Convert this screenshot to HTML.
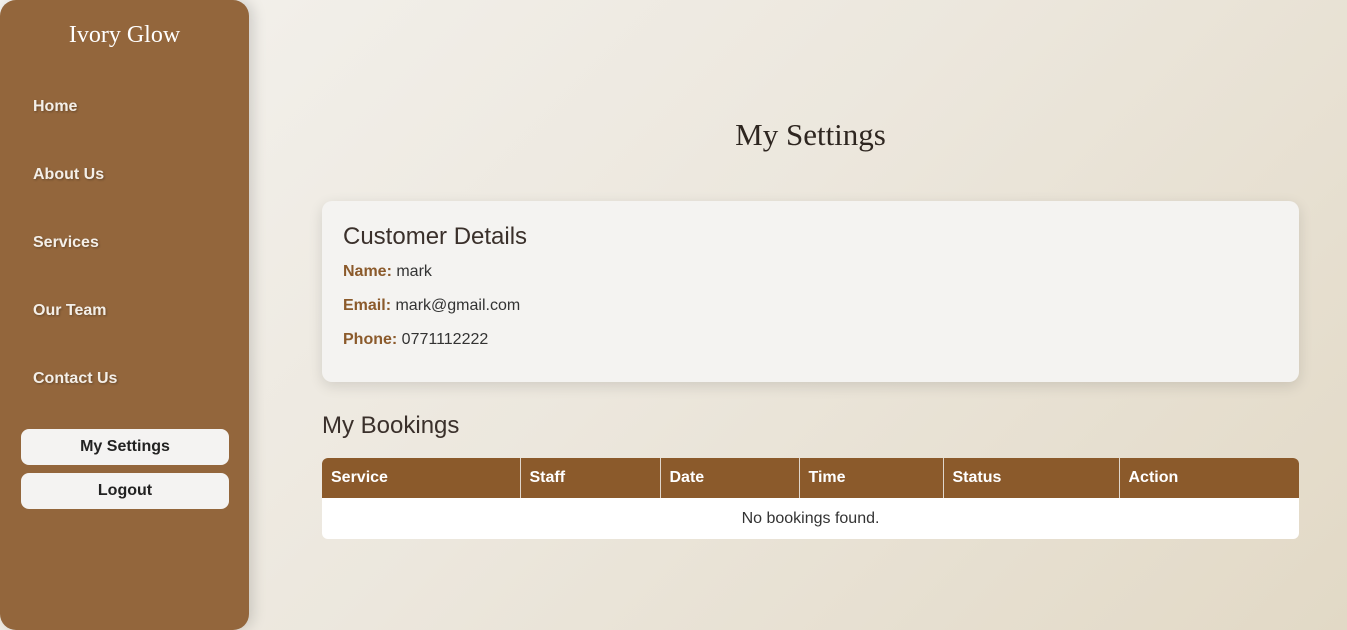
<!DOCTYPE html>
<html><head><style>
*{box-sizing:border-box;margin:0;padding:0}
body{width:1347px;height:630px;overflow:hidden;font-family:"Liberation Sans",Arial,sans-serif;background:linear-gradient(135deg,#f4f2ee 0%,#ece7dd 50%,#e2d9c6 100%);position:relative}
.side{position:absolute;left:0;top:0;width:249px;height:630px;background:#93663c;border-radius:16px;box-shadow:4px 0 14px rgba(0,0,0,.15)}
.logo{position:absolute;top:22px;width:249px;text-align:center;font-family:"Liberation Serif",serif;color:#fff;font-size:24px}
.nav{position:absolute;left:33px;color:#f4efe8;font-weight:bold;font-size:16px;text-shadow:1px 1px 2px rgba(0,0,0,.3)}
.btn{position:absolute;left:21px;width:208px;height:36px;background:#f4f3f2;border-radius:8px;text-align:center;line-height:36px;font-weight:bold;font-size:16px;color:#222}
h1{position:absolute;top:117px;left:322px;width:977px;text-align:center;font-family:"Liberation Serif",serif;font-weight:normal;font-size:31px;color:#2e2620}
.card{position:absolute;left:322px;top:201px;width:977px;height:181px;background:#f4f3f1;border-radius:10px;box-shadow:0 4px 14px rgba(0,0,0,.12);padding:22px 21px}
.card h2{font-weight:normal;font-size:24px;color:#3a302b;margin-bottom:12px}
.card p{font-size:16px;color:#333;margin-bottom:16px}
.card b{color:#8b5a2b}
h3{position:absolute;left:322px;top:412px;font-weight:normal;font-size:24px;color:#3a302b}
table{position:absolute;left:322px;top:458px;width:977px;border-collapse:collapse;border-radius:6px;overflow:hidden;background:#fff}
th{background:#8b5a2b;color:#fff;text-align:left;font-size:16px;height:40px;padding-left:9px;border-right:1px solid #e0d6cb}
th:last-child{border-right:none}
td{height:41px;text-align:center;font-size:16px;color:#333}
</style></head><body>
<div class="side">
<div class="logo">Ivory Glow</div>
<div class="nav" style="top:98px">Home</div>
<div class="nav" style="top:166px">About Us</div>
<div class="nav" style="top:234px">Services</div>
<div class="nav" style="top:302px">Our Team</div>
<div class="nav" style="top:370px">Contact Us</div>
<div class="btn" style="top:429px">My Settings</div>
<div class="btn" style="top:473px">Logout</div>
</div>
<h1>My Settings</h1>
<div class="card">
<h2>Customer Details</h2>
<p><b>Name:</b> mark</p>
<p><b>Email:</b> mark@gmail.com</p>
<p><b>Phone:</b> 0771112222</p>
</div>
<h3>My Bookings</h3>
<table>
<tr><th style="width:198px">Service</th><th style="width:140px">Staff</th><th style="width:139px">Date</th><th style="width:144px">Time</th><th style="width:176px">Status</th><th>Action</th></tr>
<tr><td colspan="6">No bookings found.</td></tr>
</table>
</body></html>
